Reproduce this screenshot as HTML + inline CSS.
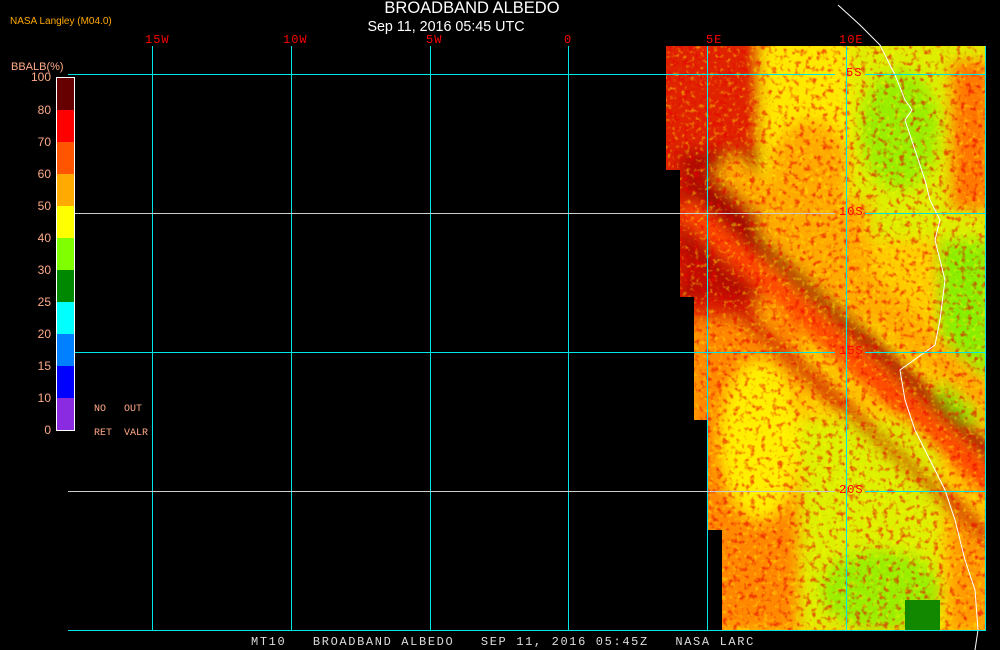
<!DOCTYPE html>
<html><head><meta charset="utf-8"><style>
html,body{margin:0;padding:0;background:#000;}
body{width:1000px;height:650px;position:relative;overflow:hidden;font-family:"Liberation Mono",monospace;}
.t{position:absolute;white-space:pre;}
</style></head><body>
<svg width="1000" height="650" style="position:absolute;left:0;top:0">
<defs>
<clipPath id="dc"><polygon points="666,46 985,46 985,630 722,630 722,530 708,530 708,420 694,420 694,297 680,297 680,170 666,170"/></clipPath>
<filter id="bl" x="-10%" y="-10%" width="120%" height="120%"><feGaussianBlur stdDeviation="7"/></filter>
<filter id="nz" x="0" y="0" width="100%" height="100%">
<feTurbulence type="fractalNoise" baseFrequency="0.18" numOctaves="2" seed="3" result="t"/>
<feColorMatrix in="t" type="matrix" values="0 0 0 0 0.8  0 0 0 0 0  0 0 0 0 0  4 0 0 0 -2.1" result="r"/>
<feComposite in="r" in2="SourceGraphic" operator="in"/>
</filter>
<filter id="nz2" x="0" y="0" width="100%" height="100%">
<feTurbulence type="fractalNoise" baseFrequency="0.22" numOctaves="2" seed="9" result="t"/>
<feColorMatrix in="t" type="matrix" values="0 0 0 0 1  0 0 0 0 0.95  0 0 0 0 0  0 4 0 0 -2.2" result="r"/>
<feComposite in="r" in2="SourceGraphic" operator="in"/>
</filter>
</defs>
<g clip-path="url(#dc)">
<rect x="660" y="40" width="330" height="600" fill="#ffcc00"/>
<g filter="url(#bl)">
<rect x="650" y="30" width="110" height="290" fill="#e02200"/>
<rect x="680" y="150" width="80" height="150" fill="#b00800"/>
<rect x="760" y="40" width="90" height="160" fill="#ffe800"/>
<ellipse cx="810" cy="170" rx="40" ry="50" fill="#ffaa00"/>
<rect x="850" y="40" width="140" height="200" fill="#ddee00"/>
<ellipse cx="900" cy="130" rx="40" ry="60" fill="#99ee00"/>
<rect x="950" y="60" width="40" height="150" fill="#ff7700"/>
<rect x="940" y="240" width="50" height="180" fill="#88ee00"/>
<rect x="760" y="200" width="110" height="120" fill="#ffaa00"/>
<rect x="690" y="320" width="110" height="310" fill="#ff8800"/>
<ellipse cx="760" cy="440" rx="40" ry="80" fill="#ffee00"/>
<rect x="800" y="420" width="140" height="210" fill="#ddf000"/>
<ellipse cx="880" cy="590" rx="60" ry="40" fill="#99ee00"/>
<rect x="950" y="520" width="40" height="110" fill="#ff9900"/>
<g transform="rotate(42 860 400)">
<rect x="600" y="345" width="520" height="14" fill="#990000"/>
<rect x="600" y="362" width="520" height="24" fill="#ff4400"/>
<rect x="600" y="300" width="520" height="30" fill="#ffaa00"/>
<rect x="600" y="410" width="520" height="12" fill="#cc1100"/>
</g>
</g>
<rect x="660" y="40" width="330" height="600" fill="#000" filter="url(#nz)" opacity=".6"/>
<rect x="660" y="40" width="330" height="600" fill="#000" filter="url(#nz2)" opacity=".45"/>
<rect x="905" y="600" width="35" height="30" fill="#118800"/>
</g>
<polyline points="838,5 860,25 880,45 895,75 905,100 912,110 905,120 915,150 925,180 930,200 940,220 935,240 945,280 940,320 935,345 900,370 905,400 915,430 930,460 945,490 955,520 965,560 975,590 978,630 975,650" fill="none" stroke="#fff" stroke-width="1"/>
<g stroke="#00e5e5" stroke-width="1" shape-rendering="crispEdges">
<line x1="152.5" y1="46" x2="152.5" y2="631"/>
<line x1="291.5" y1="46" x2="291.5" y2="631"/>
<line x1="430.5" y1="46" x2="430.5" y2="631"/>
<line x1="568.5" y1="46" x2="568.5" y2="631"/>
<line x1="707.5" y1="46" x2="707.5" y2="631"/>
<line x1="846.5" y1="46" x2="846.5" y2="631"/>
<line x1="985.5" y1="46" x2="985.5" y2="631"/>
<line x1="68" y1="74.5" x2="835" y2="74.5"/>
<line x1="865" y1="74.5" x2="986" y2="74.5"/>
<line x1="68" y1="213.5" x2="835" y2="213.5" stroke="#ccc"/>
<line x1="865" y1="213.5" x2="986" y2="213.5"/>
<line x1="68" y1="352.5" x2="835" y2="352.5"/>
<line x1="865" y1="352.5" x2="986" y2="352.5"/>
<line x1="68" y1="491.5" x2="835" y2="491.5" stroke="#ccc"/>
<line x1="865" y1="491.5" x2="986" y2="491.5"/>
<line x1="68" y1="630.5" x2="986" y2="630.5"/>
</g>
<g shape-rendering="crispEdges">
<rect x="56" y="77" width="18" height="33" fill="#660000"/>
<rect x="56" y="110" width="18" height="32" fill="#ff0000"/>
<rect x="56" y="142" width="18" height="32" fill="#ff5500"/>
<rect x="56" y="174" width="18" height="32" fill="#ffaa00"/>
<rect x="56" y="206" width="18" height="32" fill="#ffff00"/>
<rect x="56" y="238" width="18" height="32" fill="#80ff00"/>
<rect x="56" y="270" width="18" height="32" fill="#008800"/>
<rect x="56" y="302" width="18" height="32" fill="#00ffff"/>
<rect x="56" y="334" width="18" height="32" fill="#0080ff"/>
<rect x="56" y="366" width="18" height="32" fill="#0000ff"/>
<rect x="56" y="398" width="18" height="32" fill="#8a2be2"/>
<rect x="56.5" y="77.5" width="18" height="353" fill="none" stroke="#fff" stroke-width="1"/>
</g>
</svg>
<div class="t" style="left:10px;top:16px;font-family:'Liberation Sans',sans-serif;font-size:10px;color:#ffaa00">NASA Langley (M04.0)</div>
<div class="t" style="left:372px;top:-1px;width:200px;text-align:center;font-family:'Liberation Sans',sans-serif;font-size:16.5px;color:#fff">BROADBAND ALBEDO</div>
<div class="t" style="left:346px;top:19px;width:200px;text-align:center;font-family:'Liberation Sans',sans-serif;font-size:14.3px;color:#fff">Sep 11, 2016 05:45 UTC</div>
<div class="t" style="left:11px;top:61px;font-family:'Liberation Sans',sans-serif;font-size:11px;color:#ffaa88">BBALB(%)</div>
<div style="position:absolute;left:0;top:71px;width:51px;font-family:'Liberation Sans',sans-serif;font-size:12px;color:#ffaa88;text-align:right;line-height:12px">
<div style="position:absolute;right:0;top:0">100</div>
<div style="position:absolute;right:0;top:33px">80</div>
<div style="position:absolute;right:0;top:65px">70</div>
<div style="position:absolute;right:0;top:97px">60</div>
<div style="position:absolute;right:0;top:129px">50</div>
<div style="position:absolute;right:0;top:161px">40</div>
<div style="position:absolute;right:0;top:193px">30</div>
<div style="position:absolute;right:0;top:225px">25</div>
<div style="position:absolute;right:0;top:257px">20</div>
<div style="position:absolute;right:0;top:289px">15</div>
<div style="position:absolute;right:0;top:321px">10</div>
<div style="position:absolute;right:0;top:353px">0</div>
</div>
<div class="t" style="left:94px;top:404px;font-size:10px;color:#ffaa88">NO</div>
<div class="t" style="left:124px;top:404px;font-size:10px;color:#ffaa88">OUT</div>
<div class="t" style="left:94px;top:428px;font-size:10px;color:#ffaa88">RET</div>
<div class="t" style="left:124px;top:428px;font-size:10px;color:#ffaa88">VALR</div>
<div class="t" style="left:145px;top:33px;font-size:12px;letter-spacing:1px;color:#ff0000">15W</div>
<div class="t" style="left:283px;top:33px;font-size:12px;letter-spacing:1px;color:#ff0000">10W</div>
<div class="t" style="left:426px;top:33px;font-size:12px;letter-spacing:1px;color:#ff0000">5W</div>
<div class="t" style="left:564px;top:33px;font-size:12px;color:#ff0000">0</div>
<div class="t" style="left:706px;top:33px;font-size:12px;letter-spacing:1px;color:#ff0000">5E</div>
<div class="t" style="left:839px;top:33px;font-size:12px;letter-spacing:1px;color:#ff0000">10E</div>
<div class="t" style="left:846px;top:66px;font-size:12px;letter-spacing:1px;color:#ff0000">5S</div>
<div class="t" style="left:839px;top:205px;font-size:12px;letter-spacing:1px;color:#ff0000">10S</div>
<div class="t" style="left:839px;top:344px;font-size:12px;letter-spacing:1px;color:#ff0000">15S</div>
<div class="t" style="left:839px;top:483px;font-size:12px;letter-spacing:1px;color:#ff0000">20S</div>
<div class="t" style="left:251px;top:635px;font-size:12px;color:#ddd;letter-spacing:1.64px">MT10   BROADBAND ALBEDO   SEP 11, 2016 05:45Z   NASA LARC</div>
</body></html>
